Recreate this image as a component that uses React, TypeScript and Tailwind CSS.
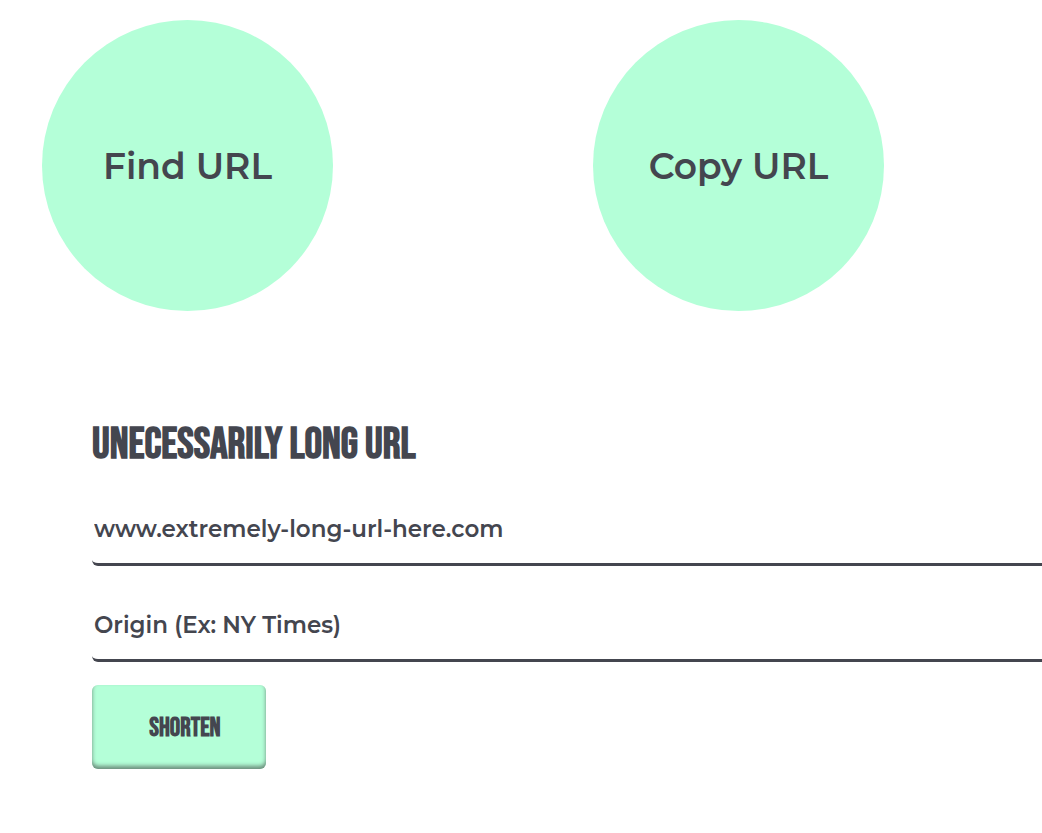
export default function App() {
  return (
    <main className="min-h-screen overflow-hidden bg-white font-['Montserrat','Inter',sans-serif] text-[#44464f]">
      <div className="flex gap-65 pl-[42px] pt-5">
        {['Find URL', 'Copy URL'].map((label) => (
          <div
            key={label}
            className="flex size-[291px] shrink-0 items-center justify-center rounded-full bg-[#b4ffd8] text-4xl font-semibold whitespace-nowrap"
          >
            {label}
          </div>
        ))}
      </div>
      <form className="mt-[110px] pl-[92px]" onSubmit={(e) => e.preventDefault()}>
        <label
          htmlFor="url"
          className="block font-['Bebas_Neue','Roboto',sans-serif] text-[44px] leading-[48px] font-bold uppercase"
        >
          Unecessarily long URL
        </label>
        <input
          id="url"
          type="text"
          placeholder="www.extremely-long-url-here.com"
          className="mt-[22px] block h-[75px] w-full rounded-l-md border-b-[3px] border-[#44464f] px-0.5 pt-1 text-[23px] font-semibold outline-none placeholder:text-[#44464f] placeholder:opacity-100"
        />
        <input
          id="origin"
          type="text"
          aria-label="Origin"
          placeholder="Origin (Ex: NY Times)"
          className="mt-[21px] block h-[75px] w-full rounded-l-md border-b-[3px] border-[#44464f] px-0.5 pt-1 text-[23px] font-semibold outline-none placeholder:text-[#44464f] placeholder:opacity-100"
        />
        <button
          type="submit"
          className="mt-[23px] h-[84px] w-[174px] rounded-md bg-[#b4ffd8] pt-0.5 pl-3 font-['Bebas_Neue','Roboto',sans-serif] text-[26px] font-bold uppercase shadow-[inset_0_-3px_4px_#6b8c7b]"
        >
          Shorten
        </button>
      </form>
    </main>
  )
}
